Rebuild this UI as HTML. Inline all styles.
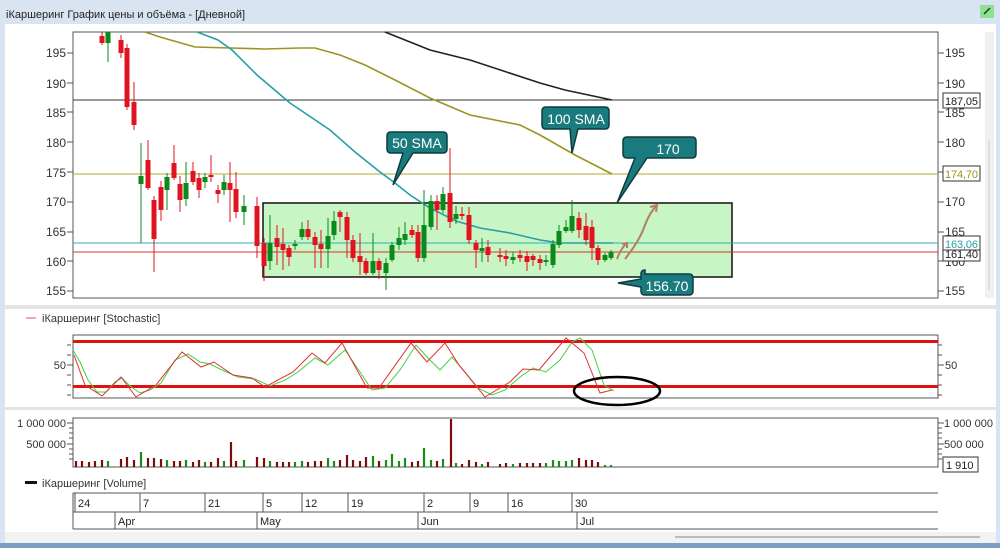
<!DOCTYPE html>
<html><head><meta charset="utf-8"><style>
html,body{margin:0;padding:0;width:1000px;height:548px;overflow:hidden;background:#d9e5f2;font-family:"Liberation Sans","DejaVu Sans",sans-serif}
svg{position:absolute;left:0;top:0}
</style></head><body>
<svg width="1000" height="548" viewBox="0 0 1000 548" font-family="Liberation Sans, DejaVu Sans, sans-serif">
<rect x="0" y="0" width="1000" height="548" fill="#d8e4f1"/>
<text x="6" y="18" font-size="11" fill="#222">iКаршеринг График цены и объёма - [Дневной]</text>
<rect x="980" y="5" width="14" height="13" fill="#8fe08f"/>
<path d="M984 14l6 -6" stroke="#234" stroke-width="1.5"/>
<rect x="5" y="24" width="991" height="517" fill="#fff"/>
<rect x="985" y="32" width="9" height="266" fill="#f0f0f0"/>
<line x1="989" y1="140" x2="989" y2="290" stroke="#ccc"/>
<rect x="5" y="305" width="991" height="4" fill="#e4e4e4"/>
<rect x="5" y="407" width="991" height="3" fill="#e4e4e4"/>
<rect x="5" y="532" width="991" height="11" fill="#f2f2f2"/>
<line x1="675" y1="537" x2="980" y2="537" stroke="#bbb" stroke-width="2"/>
<rect x="0" y="543" width="1000" height="5" fill="#7d9ec2"/>

<rect x="73" y="32" width="865" height="266" fill="#fff" stroke="#555"/>
<g font-size="12" fill="#333">
<text x="66" y="57" text-anchor="end">195</text><text x="66" y="88" text-anchor="end">190</text>
<text x="66" y="117" text-anchor="end">185</text><text x="66" y="147" text-anchor="end">180</text>
<text x="66" y="177" text-anchor="end">175</text><text x="66" y="206" text-anchor="end">170</text>
<text x="66" y="236" text-anchor="end">165</text><text x="66" y="266" text-anchor="end">160</text>
<text x="66" y="295" text-anchor="end">155</text>
<text x="945" y="57">195</text><text x="945" y="88">190</text><text x="945" y="117">185</text>
<text x="945" y="147">180</text><text x="945" y="206">170</text><text x="945" y="236">165</text>
<text x="945" y="266">160</text><text x="945" y="295">155</text>
</g>
<g stroke="#555">
<path d="M67 53h6M67 83h6M67 112h6M67 142h6M67 172h6M67 202h6M67 232h6M67 261h6M67 291h6M938 53h6M938 83h6M938 112h6M938 142h6M938 172h6M938 202h6M938 232h6M938 261h6M938 291h6"/>
</g>
<line x1="73" y1="100" x2="938" y2="100" stroke="#333"/>
<line x1="73" y1="174" x2="938" y2="174" stroke="#b0a830"/>
<rect x="263" y="203" width="469" height="74" fill="#c8f5c4" stroke="#111" stroke-width="1.5"/>
<line x1="73" y1="243" x2="938" y2="243" stroke="#3aaab0"/>
<line x1="73" y1="252" x2="938" y2="252" stroke="#e03030"/>
<polyline fill="none" stroke="#222" stroke-width="1.6" points="385,32 430,50 470,60 540,83 565,90 612,100"/>
<polyline fill="none" stroke="#9c9420" stroke-width="1.6" points="145,32 160,37 195,47 230,48 265,49 300,48 315,48 340,55 365,65 395,80 430,98 470,115 520,125 540,135 575,155 612,174"/>
<polyline fill="none" stroke="#2a9ea6" stroke-width="1.6" points="197,32 218,40 232,50 257,75 290,103 330,130 355,152 380,172 395,183 410,195 430,208 456,221 480,228 510,233 540,240 560,243 580,243 613,243"/>
<path stroke="#e0141e" fill="none" d="M102 32V45M121 35V58M127 44V110M134 82V130M148 140V190M154 196V272M161 181V221M174 145V180M180 176V212M193 162V185M199 173V198M211 155V182M218 185V203M230 162V222M236 172V218M257 197V258M264 238V281M277 225V265M283 228V270M289 245V266M308 220V240M315 232V268M321 230V268M340 210V232M347 212V258M353 235V262M360 233V275M366 258V275M379 258V279M412 225V238M418 225V262M437 195V230M450 148V228M462 207V220M469 207V244M476 240V268M488 240V262M500 248V262M506 250V266M520 250V262M527 251V271M533 254V266M540 255V270M579 212V238M586 213V245M592 220V260M598 245V265"/>
<path stroke="#0a8a1a" fill="none" d="M108 32V62M141 143V243M167 173V210M186 162V206M205 173V188M224 175V195M244 195V225M270 215V270M295 240V250M302 222V240M328 218V268M334 211V240M373 233V275M386 258V290M392 242V262M399 227V250M405 222V245M424 190V262M431 195V230M443 187V213M456 206V224M482 238V262M513 252V264M546 255V266M553 240V268M559 225V248M566 220V233M572 200V233M605 253V262M611 250V260"/>
<g fill="#e0141e">
<rect x="99.5" y="36" width="5" height="7"/><rect x="118.5" y="40" width="5" height="13"/><rect x="124.5" y="48" width="5" height="59"/><rect x="131.5" y="102" width="5" height="23"/><rect x="145.5" y="160" width="5" height="28"/><rect x="151.5" y="200" width="5" height="39"/><rect x="158.5" y="187" width="5" height="23"/><rect x="171.5" y="163" width="5" height="15"/><rect x="177.5" y="184" width="5" height="16"/><rect x="190.5" y="171" width="5" height="11"/><rect x="196.5" y="178" width="5" height="12"/><rect x="208.5" y="175" width="5" height="2"/><rect x="215.5" y="190" width="5" height="4"/><rect x="227.5" y="183" width="5" height="7"/><rect x="233.5" y="189" width="5" height="23"/><rect x="254.5" y="206" width="5" height="40"/><rect x="261.5" y="243" width="5" height="23"/><rect x="274.5" y="238" width="5" height="9"/><rect x="280.5" y="244" width="5" height="6"/><rect x="286.5" y="248" width="5" height="9"/><rect x="305.5" y="229" width="5" height="8"/><rect x="312.5" y="237" width="5" height="8"/><rect x="318.5" y="244" width="5" height="5"/><rect x="337.5" y="212" width="5" height="5"/><rect x="344.5" y="217" width="5" height="23"/><rect x="350.5" y="240" width="5" height="18"/><rect x="357.5" y="256" width="5" height="6"/><rect x="363.5" y="261" width="5" height="12"/><rect x="376.5" y="261" width="5" height="9"/><rect x="409.5" y="230" width="5" height="5"/><rect x="415.5" y="232" width="5" height="26"/><rect x="434.5" y="201" width="5" height="9"/><rect x="447.5" y="193" width="5" height="29"/><rect x="459.5" y="214" width="5" height="2"/><rect x="466.5" y="215" width="5" height="25"/><rect x="473.5" y="243" width="5" height="7"/><rect x="485.5" y="247" width="5" height="8"/><rect x="497.5" y="255" width="5" height="2"/><rect x="503.5" y="256" width="5" height="3"/><rect x="517.5" y="255" width="5" height="3"/><rect x="524.5" y="256" width="5" height="6"/><rect x="530.5" y="256" width="5" height="4"/><rect x="537.5" y="259" width="5" height="4"/><rect x="576.5" y="218" width="5" height="12"/><rect x="583.5" y="226" width="5" height="14"/><rect x="589.5" y="227" width="5" height="21"/><rect x="595.5" y="248" width="5" height="12"/>
</g>
<g fill="#0a8a1a">
<rect x="105.5" y="32" width="5" height="11"/><rect x="138.5" y="176" width="5" height="8"/><rect x="164.5" y="177" width="5" height="13"/><rect x="183.5" y="183" width="5" height="16"/><rect x="202.5" y="177" width="5" height="5"/><rect x="221.5" y="182" width="5" height="8"/><rect x="241.5" y="206" width="5" height="6"/><rect x="267.5" y="243" width="5" height="18"/><rect x="292.5" y="244" width="5" height="2"/><rect x="299.5" y="229" width="5" height="8"/><rect x="325.5" y="236" width="5" height="13"/><rect x="331.5" y="221" width="5" height="14"/><rect x="370.5" y="261" width="5" height="12"/><rect x="383.5" y="263" width="5" height="10"/><rect x="389.5" y="245" width="5" height="15"/><rect x="396.5" y="238" width="5" height="7"/><rect x="402.5" y="234" width="5" height="6"/><rect x="421.5" y="225" width="5" height="33"/><rect x="428.5" y="201" width="5" height="26"/><rect x="440.5" y="194" width="5" height="16"/><rect x="453.5" y="214" width="5" height="5"/><rect x="479.5" y="248" width="5" height="3"/><rect x="510.5" y="257" width="5" height="3"/><rect x="543.5" y="260" width="5" height="2"/><rect x="550.5" y="244" width="5" height="21"/><rect x="556.5" y="231" width="5" height="14"/><rect x="563.5" y="227" width="5" height="4"/><rect x="569.5" y="216" width="5" height="15"/><rect x="602.5" y="255" width="5" height="5"/><rect x="608.5" y="252" width="5" height="6"/>
</g>
<g stroke="#b08060" stroke-width="2" fill="none">
<path d="M617 259 Q621 248 627 243M622 244l5 -1 0 5"/>
<path d="M625 259 Q640 240 645 225 Q650 212 657 205M650 207l7 -2 -1 7"/>
</g>
<g fill="#1a7b7e" stroke="#0d3c3e" stroke-width="1.5">
<path d="M391 132h52q4 0 4 4v13q0 4 -4 4h-30l-20 32 10 -32h-12q-4 0 -4 -4v-13q0 -4 4 -4z"/>
<path d="M546 107h59q4 0 4 4v14q0 4 -4 4h-27l-6 24 -2 -24h-24q-4 0 -4 -4v-14q0 -4 4 -4z"/>
<path d="M643 137h49q4 0 4 4v13q0 4 -4 4h-45l-30 45 18 -45h-8q-4 0 -4 -4v-13q0 -4 4 -4z"/>
<path d="M645 274h44q4 0 4 4v13q0 4 -4 4h-44q-4 0 -4 -4v-4l-23 -4 23 -4v-5q0 -4 4 -4z"/>
</g>
<g fill="#fff" font-size="14" text-anchor="middle">
<text x="417" y="148">50 SMA</text><text x="576" y="124">100 SMA</text>
<text x="668" y="154">170</text><text x="667" y="291">156.70</text>
</g>
<g font-size="11">
<rect x="943" y="93" width="37" height="15" fill="#fff" stroke="#333"/><text x="945" y="105" fill="#222" textLength="33">187,05</text>
<rect x="943" y="166" width="37" height="15" fill="#fff" stroke="#333"/><text x="945" y="178" fill="#9c9420" textLength="33">174,70</text>
<rect x="943" y="246" width="37" height="15" fill="#fff" stroke="#333"/><text x="945" y="258" fill="#222" textLength="33">161,40</text>
<rect x="943" y="236" width="37" height="14" fill="#fff" stroke="#333"/><text x="945" y="248" fill="#2a9ea6" textLength="33">163,06</text>
</g>

<line x1="26" y1="318" x2="36" y2="318" stroke="#e05050"/>
<text x="42" y="322" font-size="11" fill="#333">iКаршеринг [Stochastic]</text>
<rect x="73" y="335" width="865" height="63" fill="#fff" stroke="#555"/>
<text x="66" y="369" font-size="11" fill="#333" text-anchor="end">50</text>
<text x="945" y="369" font-size="11" fill="#333">50</text>
<path stroke="#555" d="M67 365h6M938 365h6M67 345h4M67 355h4M67 375h4M67 385h4M67 395h4M938 345h4M938 355h4M938 375h4M938 385h4M938 395h4"/>
<rect x="73" y="340" width="865" height="3" fill="#e01010"/>
<rect x="73" y="385" width="865" height="3" fill="#e01010"/>
<polyline fill="none" stroke="#44d044" stroke-width="1" points="73,350 80,362 88,380 97,392 106,392 115,382 122,378 130,386 140,393 150,390 161,383 175,360 188,354 200,362 210,364 222,370 238,377 255,379 270,386 285,380 298,372 315,358 328,365 345,350 360,372 372,390 385,388 400,370 416,345 430,360 440,370 452,357 465,372 478,388 492,395 505,390 520,377 533,368 546,372 560,360 572,342 580,338 592,350 604,385 614,391"/>
<polyline fill="none" stroke="#e03030" stroke-width="1" points="74,355 85,385 102,396 121,377 136,397 156,385 182,352 201,367 214,362 233,375 252,378 265,387 293,372 312,353 325,363 342,343 367,388 379,388 411,343 427,362 445,343 459,365 485,397 510,382 523,369 539,370 566,338 584,353 600,393 612,390"/>
<ellipse cx="617" cy="391" rx="43" ry="14" fill="none" stroke="#000" stroke-width="2.5"/>

<rect x="73" y="418" width="865" height="49" fill="#fff" stroke="#555"/>
<g font-size="11" fill="#333">
<text x="66" y="427" text-anchor="end">1 000 000</text><text x="66" y="448" text-anchor="end">500 000</text>
<text x="944" y="427">1 000 000</text><text x="944" y="448">500 000</text>
</g>
<path stroke="#555" d="M67 423h6M67 444h6M938 423h6M938 444h6M69 428h4M69 433h4M69 438h4M69 449h4M69 454h4M69 459h4M938 428h4M938 433h4M938 438h4M938 449h4M938 454h4M938 459h4"/>
<rect x="943" y="457" width="35" height="15" fill="#fff" stroke="#333"/><text x="946" y="469" font-size="11" fill="#222">1 910</text>
<g stroke="#7a0c0c" stroke-width="2.2">
<path d="M76 467v-6M82 467v-6M89 467v-5M95 467v-6M102 467v-7M121 467v-8M127 467v-10M134 467v-7M148 467v-9M154 467v-9M161 467v-8M174 467v-6M180 467v-6M193 467v-5M199 467v-7M211 467v-5M218 467v-9M231 467v-25M236 467v-6M257 467v-10M264 467v-9M277 467v-5M283 467v-5M289 467v-5M308 467v-5M315 467v-6M321 467v-6M340 467v-7M347 467v-12M353 467v-7M360 467v-6M366 467v-10M379 467v-6M412 467v-5M418 467v-6M437 467v-6M451 467v-48M462 467v-3M469 467v-7M476 467v-5M488 467v-5M500 467v-3M506 467v-4M520 467v-4M527 467v-4M533 467v-4M540 467v-4M579 467v-9M586 467v-7M592 467v-7M598 467v-5"/>
</g>
<g stroke="#1a8a1a" stroke-width="2.2">
<path d="M108 467v-6M141 467v-15M167 467v-7M186 467v-7M205 467v-5M224 467v-6M244 467v-7M270 467v-6M295 467v-5M302 467v-6M328 467v-9M334 467v-6M373 467v-11M386 467v-7M392 467v-13M399 467v-6M405 467v-9M424 467v-19M431 467v-7M443 467v-8M456 467v-4M482 467v-3M513 467v-3M546 467v-4M553 467v-7M559 467v-6M566 467v-6M572 467v-7M605 467v-2M611 467v-2"/>
</g>
<rect x="25" y="481" width="12" height="3" fill="#111"/>
<text x="42" y="487" font-size="11" fill="#333">iКаршеринг [Volume]</text>

<g stroke="#555" fill="none">
<path d="M73 493H938M73 512H938M73 529H938M73 493V529M75 493V512"/>
<path d="M140 493V512M205 493V512M263 493V512M302 493V512M348 493V512M424 493V512M470 493V512M508 493V512M572 493V512"/>
<path d="M115 512V529M257 512V529M418 512V529M577 512V529"/>
</g>
<g font-size="11" fill="#222">
<text x="78" y="507">24</text><text x="143" y="507">7</text><text x="208" y="507">21</text><text x="266" y="507">5</text>
<text x="305" y="507">12</text><text x="351" y="507">19</text><text x="427" y="507">2</text><text x="473" y="507">9</text>
<text x="511" y="507">16</text><text x="575" y="507">30</text>
<text x="118" y="525">Apr</text><text x="260" y="525">May</text><text x="421" y="525">Jun</text><text x="580" y="525">Jul</text>
</g>
</svg>
</body></html>
